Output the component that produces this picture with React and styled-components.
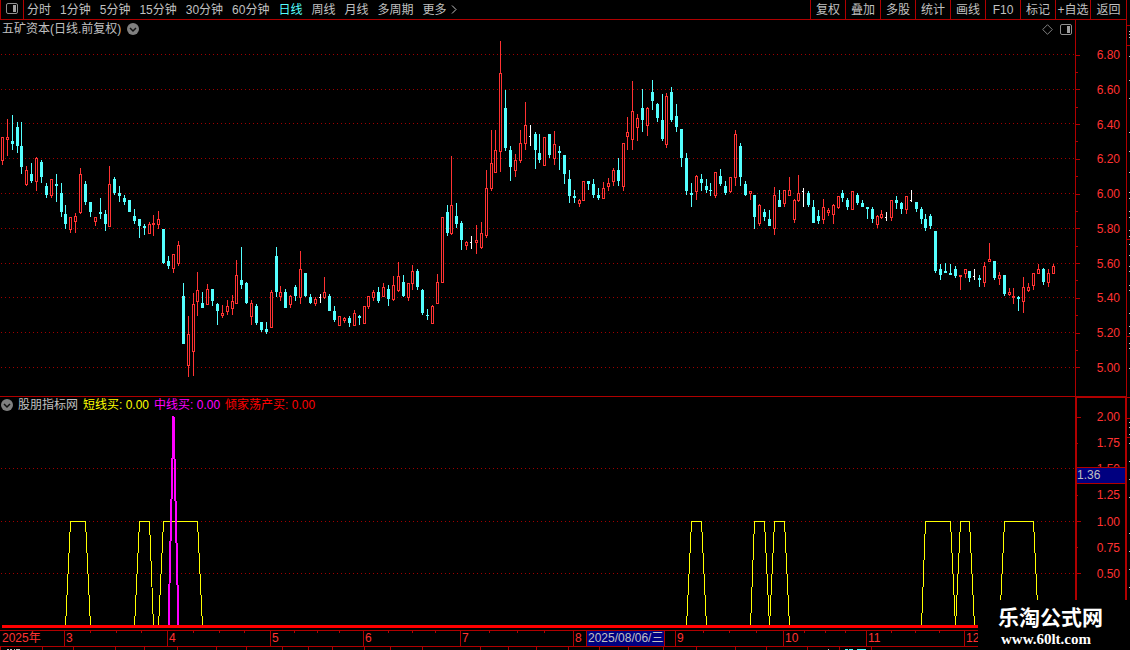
import { useState } from "react";
import styled, { createGlobalStyle } from "styled-components"


const periods = ["分时", "1分钟", "5分钟", "15分钟", "30分钟", "60分钟", "日线", "周线", "月线", "多周期", "更多"];
const tools = ["复权", "叠加", "多股", "统计", "画线", "F10", "标记", "+自选", "返回"];

const priceLabels = ["6.80", "6.60", "6.40", "6.20", "6.00", "5.80", "5.60", "5.40", "5.20", "5.00"];
const priceGrid = [54, 89, 123, 158, 193, 228, 263, 297, 332, 367];
const signalLabels = ["2.00", "1.75", "1.50", "1.25", "1.00", "0.75", "0.50"];
const signalGrid = [468, 521, 573];

const months = [
    {label: "2025年", size: 64}, {label: "3", size: 103}, {label: "4", size: 103}, {label: "5", size: 93},
    {label: "6", size: 97}, {label: "7", size: 113}, {label: "8", size: 102}, {label: "9", size: 108},
    {label: "10", size: 83}, {label: "11", size: 98}, {label: "12", size: 162}
];
const stripCells = [42, 31, 42, 29, 33, 39, 30, 36, 26, 24, 32, 26, 32, 58, 28, 28, 32, 31, 29, 35, 33, 39, 31, 41, 32, 32, 255];

// x, high, body top, body bottom, low, kind (r = up, c = down, w = flat)
const candles = [
    [2,137,137,161,165,"r"],[7,119,137,140,156,"r"],[12,115,141,144,150,"c"],[17,122,127,146,153,"c"],
    [21,122,146,167,174,"c"],[26,166,170,185,186,"r"],[31,163,174,181,183,"c"],[36,157,158,182,191,"r"],
    [41,160,162,177,183,"c"],[46,183,186,195,198,"c"],[51,179,179,196,198,"r"],[56,174,184,186,202,"c"],
    [61,183,193,212,217,"c"],[65,205,214,224,229,"c"],[70,217,217,230,233,"r"],[75,213,216,222,233,"r"],
    [80,168,174,213,214,"r"],[85,181,184,202,205,"c"],[90,202,202,212,217,"c"],[95,217,217,222,226,"r"],
    [100,198,212,214,219,"c"],[105,210,214,224,231,"c"],[109,166,184,227,227,"r"],[114,177,179,193,195,"c"],
    [119,186,193,196,202,"c"],[124,195,198,202,205,"c"],[129,200,200,212,212,"c"],[134,209,216,221,224,"c"],
    [139,219,219,226,238,"c"],[144,224,226,228,235,"c"],[149,222,224,234,234,"r"],[153,215,223,225,236,"r"],
    [158,211,219,225,229,"r"],[163,229,229,263,264,"c"],[168,256,261,266,269,"c"],[173,254,254,269,273,"r"],
    [178,241,245,264,266,"r"],[183,283,296,344,344,"c"],[188,316,334,366,377,"r"],[193,293,304,352,376,"r"],
    [197,272,290,302,316,"r"],[202,292,303,308,308,"c"],[207,284,289,305,305,"r"],[212,289,289,301,306,"c"],
    [217,303,304,311,325,"c"],[222,305,313,316,318,"r"],[227,300,306,312,315,"r"],[232,295,301,309,315,"r"],
    [236,260,275,304,304,"r"],[241,247,280,285,289,"c"],[246,282,283,303,304,"c"],[251,300,303,317,325,"r"],
    [256,304,306,323,325,"c"],[261,322,322,330,332,"c"],[266,322,329,332,334,"c"],[271,290,292,328,328,"r"],
    [276,247,256,292,297,"c"],[280,286,292,297,301,"r"],[285,289,292,308,308,"c"],[290,295,296,305,308,"r"],
    [295,285,287,296,301,"c"],[300,251,269,298,304,"r"],[305,273,273,296,297,"c"],[310,294,297,303,304,"c"],
    [315,297,299,304,306,"r"],[320,294,297,298,303,"w"],[324,277,292,298,299,"r"],[329,294,296,311,311,"c"],
    [334,306,311,320,322,"c"],[339,316,316,326,326,"r"],[344,317,318,321,323,"r"],[349,316,318,323,327,"c"],
    [354,310,313,326,326,"r"],[359,315,316,318,325,"c"],[364,306,306,324,324,"r"],[368,296,296,307,309,"r"],
    [373,290,292,298,301,"r"],[378,287,292,301,303,"c"],[383,283,287,297,297,"r"],[388,285,289,299,306,"c"],
    [393,276,285,300,301,"r"],[398,262,276,291,292,"r"],[403,275,282,296,297,"c"],[408,283,283,298,301,"r"],
    [412,265,271,284,290,"r"],[417,269,271,287,290,"c"],[422,289,290,313,315,"c"],[427,309,315,316,320,"c"],
    [432,305,306,324,324,"r"],[437,274,282,304,304,"r"],[442,217,217,283,283,"r"],[447,205,212,233,236,"c"],
    [451,156,205,234,235,"r"],[456,203,216,224,228,"c"],[461,221,223,240,250,"c"],[466,241,242,246,250,"r"],
    [471,236,242,243,249,"w"],[476,225,240,243,254,"r"],[481,222,233,248,249,"r"],[486,170,188,236,238,"r"],
    [491,130,163,189,191,"r"],[495,130,150,173,173,"r"],[500,41,73,152,172,"r"],[505,90,108,148,151,"c"],
    [510,146,150,167,181,"c"],[515,154,160,171,177,"r"],[520,130,143,161,163,"r"],[525,102,125,144,150,"r"],
    [530,125,136,137,146,"w"],[535,132,134,150,169,"c"],[539,134,153,160,163,"c"],[544,137,137,166,166,"r"],
    [549,134,134,155,158,"c"],[554,131,144,159,165,"r"],[559,146,151,153,170,"c"],[564,155,155,174,184,"c"],
    [569,170,179,196,203,"c"],[574,190,196,198,203,"c"],[579,199,200,204,207,"r"],[583,181,181,201,201,"r"],
    [588,181,181,184,190,"c"],[593,179,184,195,198,"c"],[598,188,195,198,200,"c"],[603,182,188,199,199,"r"],
    [608,178,183,187,191,"r"],[613,168,170,182,186,"r"],[618,158,170,181,186,"c"],[623,143,143,187,191,"r"],
    [627,117,132,137,150,"r"],[632,81,111,140,150,"r"],[637,114,118,128,141,"r"],[642,89,108,120,132,"c"],
    [647,107,108,126,136,"r"],[652,80,92,101,110,"c"],[657,103,104,118,122,"c"],[662,94,120,139,141,"c"],
    [666,93,96,145,148,"r"],[671,87,92,120,122,"c"],[676,104,116,127,132,"c"],[681,129,129,158,167,"c"],
    [686,153,158,191,195,"c"],[691,183,193,195,207,"c"],[696,175,176,192,200,"r"],[701,174,179,183,191,"c"],
    [706,179,186,190,193,"c"],[710,183,190,191,196,"c"],[715,172,172,196,198,"r"],[720,169,176,184,186,"c"],
    [725,181,186,193,195,"c"],[730,177,177,192,193,"r"],[735,130,134,178,186,"r"],[740,143,146,177,186,"c"],
    [745,181,184,195,196,"c"],[750,191,191,194,200,"r"],[754,195,195,217,229,"c"],[759,204,205,224,226,"r"],
    [764,209,212,217,221,"c"],[769,210,219,226,226,"c"],[774,187,195,229,235,"r"],[779,190,200,207,207,"c"],
    [784,190,190,204,207,"r"],[789,177,190,196,196,"r"],[794,199,200,220,223,"r"],[798,175,193,201,202,"r"],
    [803,188,191,192,207,"w"],[808,191,193,205,207,"c"],[813,200,207,223,223,"c"],[818,210,216,221,224,"c"],
    [823,199,207,220,224,"r"],[828,208,210,213,216,"r"],[833,204,205,215,224,"r"],[838,196,196,208,209,"r"],
    [842,190,193,198,202,"c"],[847,198,200,207,210,"c"],[852,191,191,210,210,"r"],[857,193,195,203,205,"c"],
    [862,200,203,207,207,"c"],[867,207,207,209,219,"c"],[872,207,209,219,223,"c"],[877,215,216,225,228,"r"],
    [881,210,214,218,219,"r"],[886,212,217,218,221,"w"],[891,200,200,218,221,"r"],[896,196,200,203,209,"c"],
    [901,202,203,209,214,"c"],[906,196,196,210,214,"r"],[911,190,200,201,202,"w"],[916,202,202,209,212,"c"],
    [921,207,209,219,224,"c"],[925,214,219,228,231,"c"],[930,214,216,226,229,"c"],[935,231,231,271,273,"c"],
    [940,264,269,275,280,"c"],[945,263,271,273,273,"c"],[950,264,273,275,275,"c"],[955,266,269,276,278,"c"],
    [960,275,275,277,290,"r"],[965,269,269,274,278,"r"],[969,271,271,278,282,"c"],[974,269,276,277,280,"w"],
    [979,275,278,280,287,"c"],[984,262,266,283,287,"r"],[989,243,259,262,262,"r"],[994,261,261,278,280,"c"],
    [999,272,275,279,285,"r"],[1004,275,275,294,296,"c"],[1009,288,292,295,296,"r"],[1013,288,296,298,304,"r"],
    [1018,296,297,299,311,"c"],[1023,277,287,302,313,"r"],[1028,283,287,291,292,"r"],[1033,273,273,286,290,"r"],
    [1038,264,269,274,274,"r"],[1043,268,269,282,285,"c"],[1048,269,273,283,287,"r"],[1053,264,266,274,274,"r"]
];

// rise start, plateau start, plateau end, fall end
const shortSignals = [
    [65, 70, 85, 90], [134, 139, 149, 153], [158, 163, 197, 202], [686, 691, 701, 706], [750, 754, 764, 769],
    [769, 774, 784, 789], [921, 925, 950, 955], [955, 960, 969, 974], [999, 1004, 1033, 1038]
];

const edgeLines = [25, 45, 239, 336, 397, 418, 437];
const edgeMarks = [31, 34, 37, 56, 80, 98, 132, 151, 172, 192, 198, 211, 217, 230, 236, 244, 255, 266, 271, 285, 290,
    313, 326, 333, 343, 348, 368, 422, 427, 434, 443, 461, 479, 497, 533, 551, 569, 587];


function PanelIcon(){
    return(
        <svg width="12" height="11" viewBox="0 0 12 11" aria-hidden="true">
            <rect x="0.5" y="0.5" width="11" height="10" rx="1.5" fill="none" stroke="#909090"/>
            <rect x="7" y="2" width="3" height="7" fill="#a0a0a0"/>
        </svg>
    )
}

function ChevronIcon(){
    return(
        <svg width="12" height="12" viewBox="0 0 12 12" aria-hidden="true">
            <circle cx="6" cy="6" r="6" fill="#808080"/>
            <path d="M3 5 L6 8 L9 5" fill="none" stroke="#101010" strokeWidth="1.5"/>
        </svg>
    )
}

function GridLines({rows}){
    return rows.map((y) => <line key={y} x1="1" x2="1075" y1={y + 0.5} y2={y + 0.5} stroke="#a00000" strokeDasharray="1 3"/>)
}

function Candle({data}){
    const [x, high, top, bottom, low, kind] = data;

    if(kind === "w"){
        return <path d={`M${x} ${high}h1V${low}h-1zM${x - 1} ${top}h1v1h-1z`} fill="#ffffff"/>
    }
    if(kind === "c"){
        return <path d={`M${x} ${high}h1V${low}h-1zM${x - 1} ${top}h3V${bottom}h-3z`} fill="#54ffff"/>
    }
    return(
        <>
            <path d={`M${x} ${high}h1V${top}h-1zM${x} ${bottom}h1V${low}h-1z`} fill="#ff3232"/>
            <rect x={x - 0.5} y={top + 0.5} width="2" height={bottom - top - 1} fill="#000000" stroke="#ff3232"/>
        </>
    )
}

function PriceScale(){
    return(
        <Scale>
            {priceLabels.map((label, index) => [
                index > 0 ? <MinorTick key={"m" + label}/> : null,
                <ScaleLabel key={label}>{label}</ScaleLabel>
            ])}
        </Scale>
    )
}

// tops of the tab captions that run off the bottom edge
function StripMark({index}){
    if(index === 0){
        return(
            <svg width="20" height="3" viewBox="0 0 20 3" aria-hidden="true">
                <path d="M6 2h2v1h-2zM9 2h2v1h-2zM13 2h1v1h-1zM15 2h4v1h-4z" fill="#c0c0c0"/>
            </svg>
        )
    }
    if(index === 24){
        return(
            <svg width="24" height="3" viewBox="0 0 24 3" aria-hidden="true">
                <path d="M20 2h1v1h-1z" fill="#c0c0c0"/>
            </svg>
        )
    }
    if(index === 25){
        return(
            <svg width="30" height="3" viewBox="0 0 30 3" aria-hidden="true">
                <path d="M5 2h3v1h-3zM9 2h4v1h-4zM17 2h9v1h-9z" fill="#54ffff"/>
            </svg>
        )
    }
    return null
}


export default function App(){

    const [period, setPeriod] = useState("日线");

    return(
        <>
            <GlobalStyle/>
            <Screen>
                <Main>
                    <Toolbar>
                        <LayoutButton aria-label="布局"><PanelIcon/></LayoutButton>
                        <Periods>
                            {periods.map((name) => (
                                <PeriodButton key={name} $active={name === period} onClick={() => setPeriod(name)}>
                                    {name}
                                    {name === "更多" ?
                                        <svg width="6" height="9" viewBox="0 0 6 9" aria-hidden="true">
                                            <path d="M1 0.5 L5 4.5 L1 8.5" fill="none" stroke="#c0c0c0"/>
                                        </svg> : null}
                                </PeriodButton>
                            ))}
                        </Periods>
                        {tools.map((name) => <ToolButton key={name}>{name}</ToolButton>)}
                    </Toolbar>

                    <Panel>
                        <Plot>
                            <TitleRow>
                                <h1>五矿资本(日线.前复权)</h1>
                                <IconButton aria-label="展开"><ChevronIcon/></IconButton>
                                <TitleActions>
                                    <IconButton aria-label="标记点">
                                        <svg width="11" height="11" viewBox="0 0 11 11" aria-hidden="true">
                                            <path d="M5.5 0.7 L10.3 5.5 L5.5 10.3 L0.7 5.5z" fill="none" stroke="#808080"/>
                                        </svg>
                                    </IconButton>
                                    <IconButton aria-label="侧栏"><PanelIcon/></IconButton>
                                </TitleActions>
                            </TitleRow>
                            <Chart height="356" viewBox="0 40 1075 356" preserveAspectRatio="none">
                                <GridLines rows={priceGrid}/>
                                {candles.map((candle) => <Candle key={candle[0]} data={candle}/>)}
                            </Chart>
                        </Plot>
                        <PriceAxis><PriceScale/></PriceAxis>
                    </Panel>

                    <Panel>
                        <SignalPlot>
                            <SignalRow>
                                <IconButton aria-label="展开"><ChevronIcon/></IconButton>
                                <h2>股朋指标网</h2>
                                <Signal $color="#ffff00">短线买: 0.00</Signal>
                                <Signal $color="#ff00ff">中线买: 0.00</Signal>
                                <Signal $color="#ff0000">倾家荡产买: 0.00</Signal>
                            </SignalRow>
                            <Chart height="216" viewBox="0 414 1075 216" preserveAspectRatio="none">
                                <GridLines rows={signalGrid}/>
                                {shortSignals.map(([a, b, c, d]) => (
                                    <path key={a} d={`M${a + 0.5} 626.5 L${b + 0.5} 521.5 H${c + 0.5} L${d + 0.5} 626.5`}
                                        fill="none" stroke="#ffff00"/>
                                ))}
                                <path d="M168.5 626 L173.5 416 L178.5 626" fill="none" stroke="#ff00ff" strokeWidth="2" strokeLinejoin="bevel"/>
                                <rect x="2" y="625" width="1073" height="3" fill="#ff0000"/>
                            </Chart>
                        </SignalPlot>
                        <SignalAxis>
                            <SignalScale>
                                {signalLabels.map((label, index) => <ScaleLabel key={label} $minor={index % 2 === 1}>{label}</ScaleLabel>)}
                            </SignalScale>
                            <ValueTag>1.36</ValueTag>
                        </SignalAxis>
                    </Panel>

                    <Timeline>
                        {months.map(({label}, index) => (
                            <Month key={label} $first={index === 0}>
                                {label}
                                {label === "8" ? <DateTag>2025/08/06/三</DateTag> : null}
                            </Month>
                        ))}
                    </Timeline>
                    <Strip>
                        {stripCells.map((size, index) => <StripCell key={index}><StripMark index={index}/></StripCell>)}
                    </Strip>
                </Main>

                <Edge>
                    <svg width="3" height="650" viewBox="0 0 3 650" shapeRendering="crispEdges" aria-hidden="true">
                        {edgeLines.map((y) => <rect key={y} x="0" y={y} width="3" height="1" fill="#b00000"/>)}
                        {edgeMarks.map((y) => <rect key={y} x="2" y={y} width="1" height="1" fill="#c0c0c0"/>)}
                    </svg>
                </Edge>

                <Watermark>
                    <strong>乐淘公式网</strong>
                    <span>www.60lt.com</span>
                </Watermark>
            </Screen>
        </>
    )
}


const GlobalStyle = createGlobalStyle`
* {
    box-sizing: border-box;
}
body {
    margin: 0;
    background: #000000;
    color: #c0c0c0;
    font-family: "Liberation Sans", "Noto Sans CJK SC", sans-serif;
    font-size: 12px;
    line-height: 14px;
    overflow: hidden;
}
button {
    padding: 0;
    border: none;
    background: none;
    color: inherit;
    font: inherit;
    white-space: nowrap;
}
h1, h2 {
    margin: 0;
    font-size: 12px;
    font-weight: 400;
}
svg {
    display: block;
}
`

const Screen = styled.div`
display: flex;
position: relative;
min-height: 100vh;
overflow: hidden;
`
const Main = styled.main`
display: flex;
flex-direction: column;
flex: 1;
min-width: 0;
`
const Toolbar = styled.header`
display: flex;
height: 20px;
border-bottom: 1px solid #b00000;
`
const LayoutButton = styled.button`
display: flex;
align-items: center;
justify-content: center;
width: 24px;
padding-bottom: 2px;
border-left: 1px solid #b00000;
border-right: 1px solid #b00000;
`
const Periods = styled.nav`
display: flex;
flex: 1;
gap: 9px;
padding-left: 3px;
overflow: hidden;
`
const PeriodButton = styled.button`
display: flex;
align-items: center;
gap: 4px;
color: ${(props) => props.$active ? "#54ffff" : "#c0c0c0"};
`
const ToolButton = styled.button`
width: 35px;
border-left: 1px solid #b00000;

&:last-child{
    width: 36px;
}
`
const Panel = styled.section`
display: flex;
`
const Plot = styled.div`
flex: 1;
min-width: 0;
`
const SignalPlot = styled(Plot)`
border-top: 1px solid #b00000;
`
const TitleRow = styled.div`
display: flex;
align-items: center;
gap: 6px;
height: 20px;
padding: 0 3px 2px 2px;
`
const TitleActions = styled.div`
display: flex;
align-items: center;
gap: 7px;
margin-left: auto;
`
const IconButton = styled.button`
flex: none;
`
const SignalRow = styled.div`
display: flex;
align-items: center;
gap: 5px;
height: 17px;
padding: 0 0 1px 1px;
`
const Signal = styled.span`
color: ${(props) => props.$color};
white-space: nowrap;
`
const Chart = styled.svg`
width: 100%;
shape-rendering: crispEdges;
`
const PriceAxis = styled.aside`
display: flex;
width: 51px;
padding: 28px 6px 21px 0;
border-left: 1px solid #b00000;
`
const SignalAxis = styled.aside`
position: relative;
width: 51px;
padding: 12px 5px 0 0;
border: solid #b00000;
border-width: 2px 1px 0 2px;
`
const Scale = styled.div`
display: flex;
flex-direction: column;
justify-content: space-between;
flex: 1;
color: #ff3232;
`
const SignalScale = styled(Scale)`
height: 171px;
`
const ScaleLabel = styled.div`
display: flex;
align-items: center;
justify-content: space-between;

&::before{
    content: "";
    width: ${(props) => props.$minor ? "1px" : "4px"};
    height: 1px;
    background: #b00000;
}
`
const MinorTick = styled.div`
width: 2px;
height: 1px;
background: #b00000;
`
const ValueTag = styled.div`
position: absolute;
top: 69px;
left: 0;
right: 0;
border: solid #b00000;
border-width: 1px 0;
background: #000080;
line-height: 15px;
`
const Timeline = styled.ol`
display: grid;
grid-template-columns: ${months.map(({size}) => `minmax(0, ${size}fr)`).join(" ")};
height: 17px;
margin: 0;
padding: 0;
border: solid #b00000;
border-width: 1px 0;
list-style: none;
color: #ff3232;
line-height: 15px;
`
const tick = "linear-gradient(#b00000, #b00000)";

const Month = styled.li`
position: relative;
padding-left: 1px;
border-left: 1px solid ${(props) => props.$first ? "transparent" : "#b00000"};
background: ${(props) => props.$first ? "none" : `${tick} 25% 0, ${tick} 50% 0, ${tick} 75% 0`};
background-size: 1px 2px;
background-repeat: no-repeat;
white-space: nowrap;
`
const DateTag = styled.span`
position: absolute;
top: 0;
left: 12px;
z-index: 1;
width: 79px;
padding-left: 1px;
border: solid #b00000;
border-width: 0 1px;
background: #000080;
color: #c0c0c0;
`
const Strip = styled.div`
display: grid;
grid-template-columns: ${stripCells.map((size) => `minmax(0, ${size}fr)`).join(" ")};
height: 3px;
overflow: hidden;
`
const StripCell = styled.div`
border-left: 1px solid #b00000;
`
const Edge = styled.div`
width: 4px;
border-left: 1px solid #b00000;
`
const Watermark = styled.div`
position: absolute;
right: 0;
bottom: 0;
z-index: 2;
display: flex;
flex-direction: column;
width: 152px;
height: 50px;
padding: 6px 0 0 20px;
background: #000000;
color: #ffffff;

strong{
font-size: 21px;
line-height: 24px;
}
span{
padding-left: 3px;
font-family: "Liberation Serif", serif;
font-size: 15px;
font-weight: 700;
line-height: 18px;
}
`
